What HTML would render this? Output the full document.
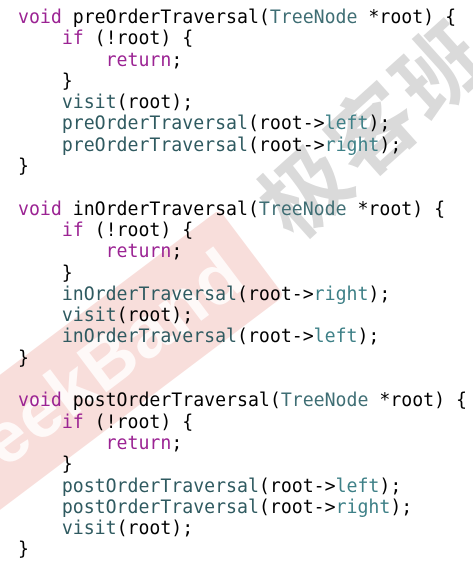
<!DOCTYPE html>
<html><head><meta charset="utf-8"><style>
html,body{margin:0;padding:0;background:#fff;width:473px;height:570px;overflow:hidden;position:relative}
.band{position:absolute;left:-117px;top:322px;width:410px;height:108px;background:rgba(214,60,40,0.17);transform:rotate(-37deg);transform-origin:center;border-radius:6px}
.bandtxt{position:absolute;left:-117px;top:322px;width:410px;height:108px;transform:rotate(-37deg);color:rgba(255,255,255,0.8);font:bold 72px "Liberation Sans",sans-serif;line-height:108px;text-align:right;letter-spacing:1px;white-space:nowrap;overflow:hidden}
.cn{position:absolute;left:210px;top:70px;width:320px;height:110px;transform:rotate(-42deg);color:rgba(150,150,150,0.35);font:bold 86px "Noto Sans CJK SC",sans-serif;line-height:110px;text-align:center;letter-spacing:4px}
pre{position:absolute;left:18px;top:7px;margin:0;font-family:"DejaVu Sans Mono","Liberation Mono",monospace;font-size:18.2px;line-height:21.3px;color:#000;z-index:2}
.k{color:#9b2393}.t{color:#3f6e74}.f{color:#2f5a60}.m{color:#3e8087}
</style></head><body>
<div class="band"></div>
<div class="bandtxt">GeekBand&nbsp;</div>
<div class="cn">极客班</div>
<pre><span class="k">void</span> preOrderTraversal(<span class="t">TreeNode</span> *root) {
    <span class="k">if</span> (!root) {
        <span class="k">return</span>;
    }
    <span class="f">visit</span>(root);
    <span class="f">preOrderTraversal</span>(root-&gt;<span class="m">left</span>);
    <span class="f">preOrderTraversal</span>(root-&gt;<span class="m">right</span>);
}

<span class="k">void</span> inOrderTraversal(<span class="t">TreeNode</span> *root) {
    <span class="k">if</span> (!root) {
        <span class="k">return</span>;
    }
    <span class="f">inOrderTraversal</span>(root-&gt;<span class="m">right</span>);
    <span class="f">visit</span>(root);
    <span class="f">inOrderTraversal</span>(root-&gt;<span class="m">left</span>);
}

<span class="k">void</span> postOrderTraversal(<span class="t">TreeNode</span> *root) {
    <span class="k">if</span> (!root) {
        <span class="k">return</span>;
    }
    <span class="f">postOrderTraversal</span>(root-&gt;<span class="m">left</span>);
    <span class="f">postOrderTraversal</span>(root-&gt;<span class="m">right</span>);
    <span class="f">visit</span>(root);
}</pre>
</body></html>
